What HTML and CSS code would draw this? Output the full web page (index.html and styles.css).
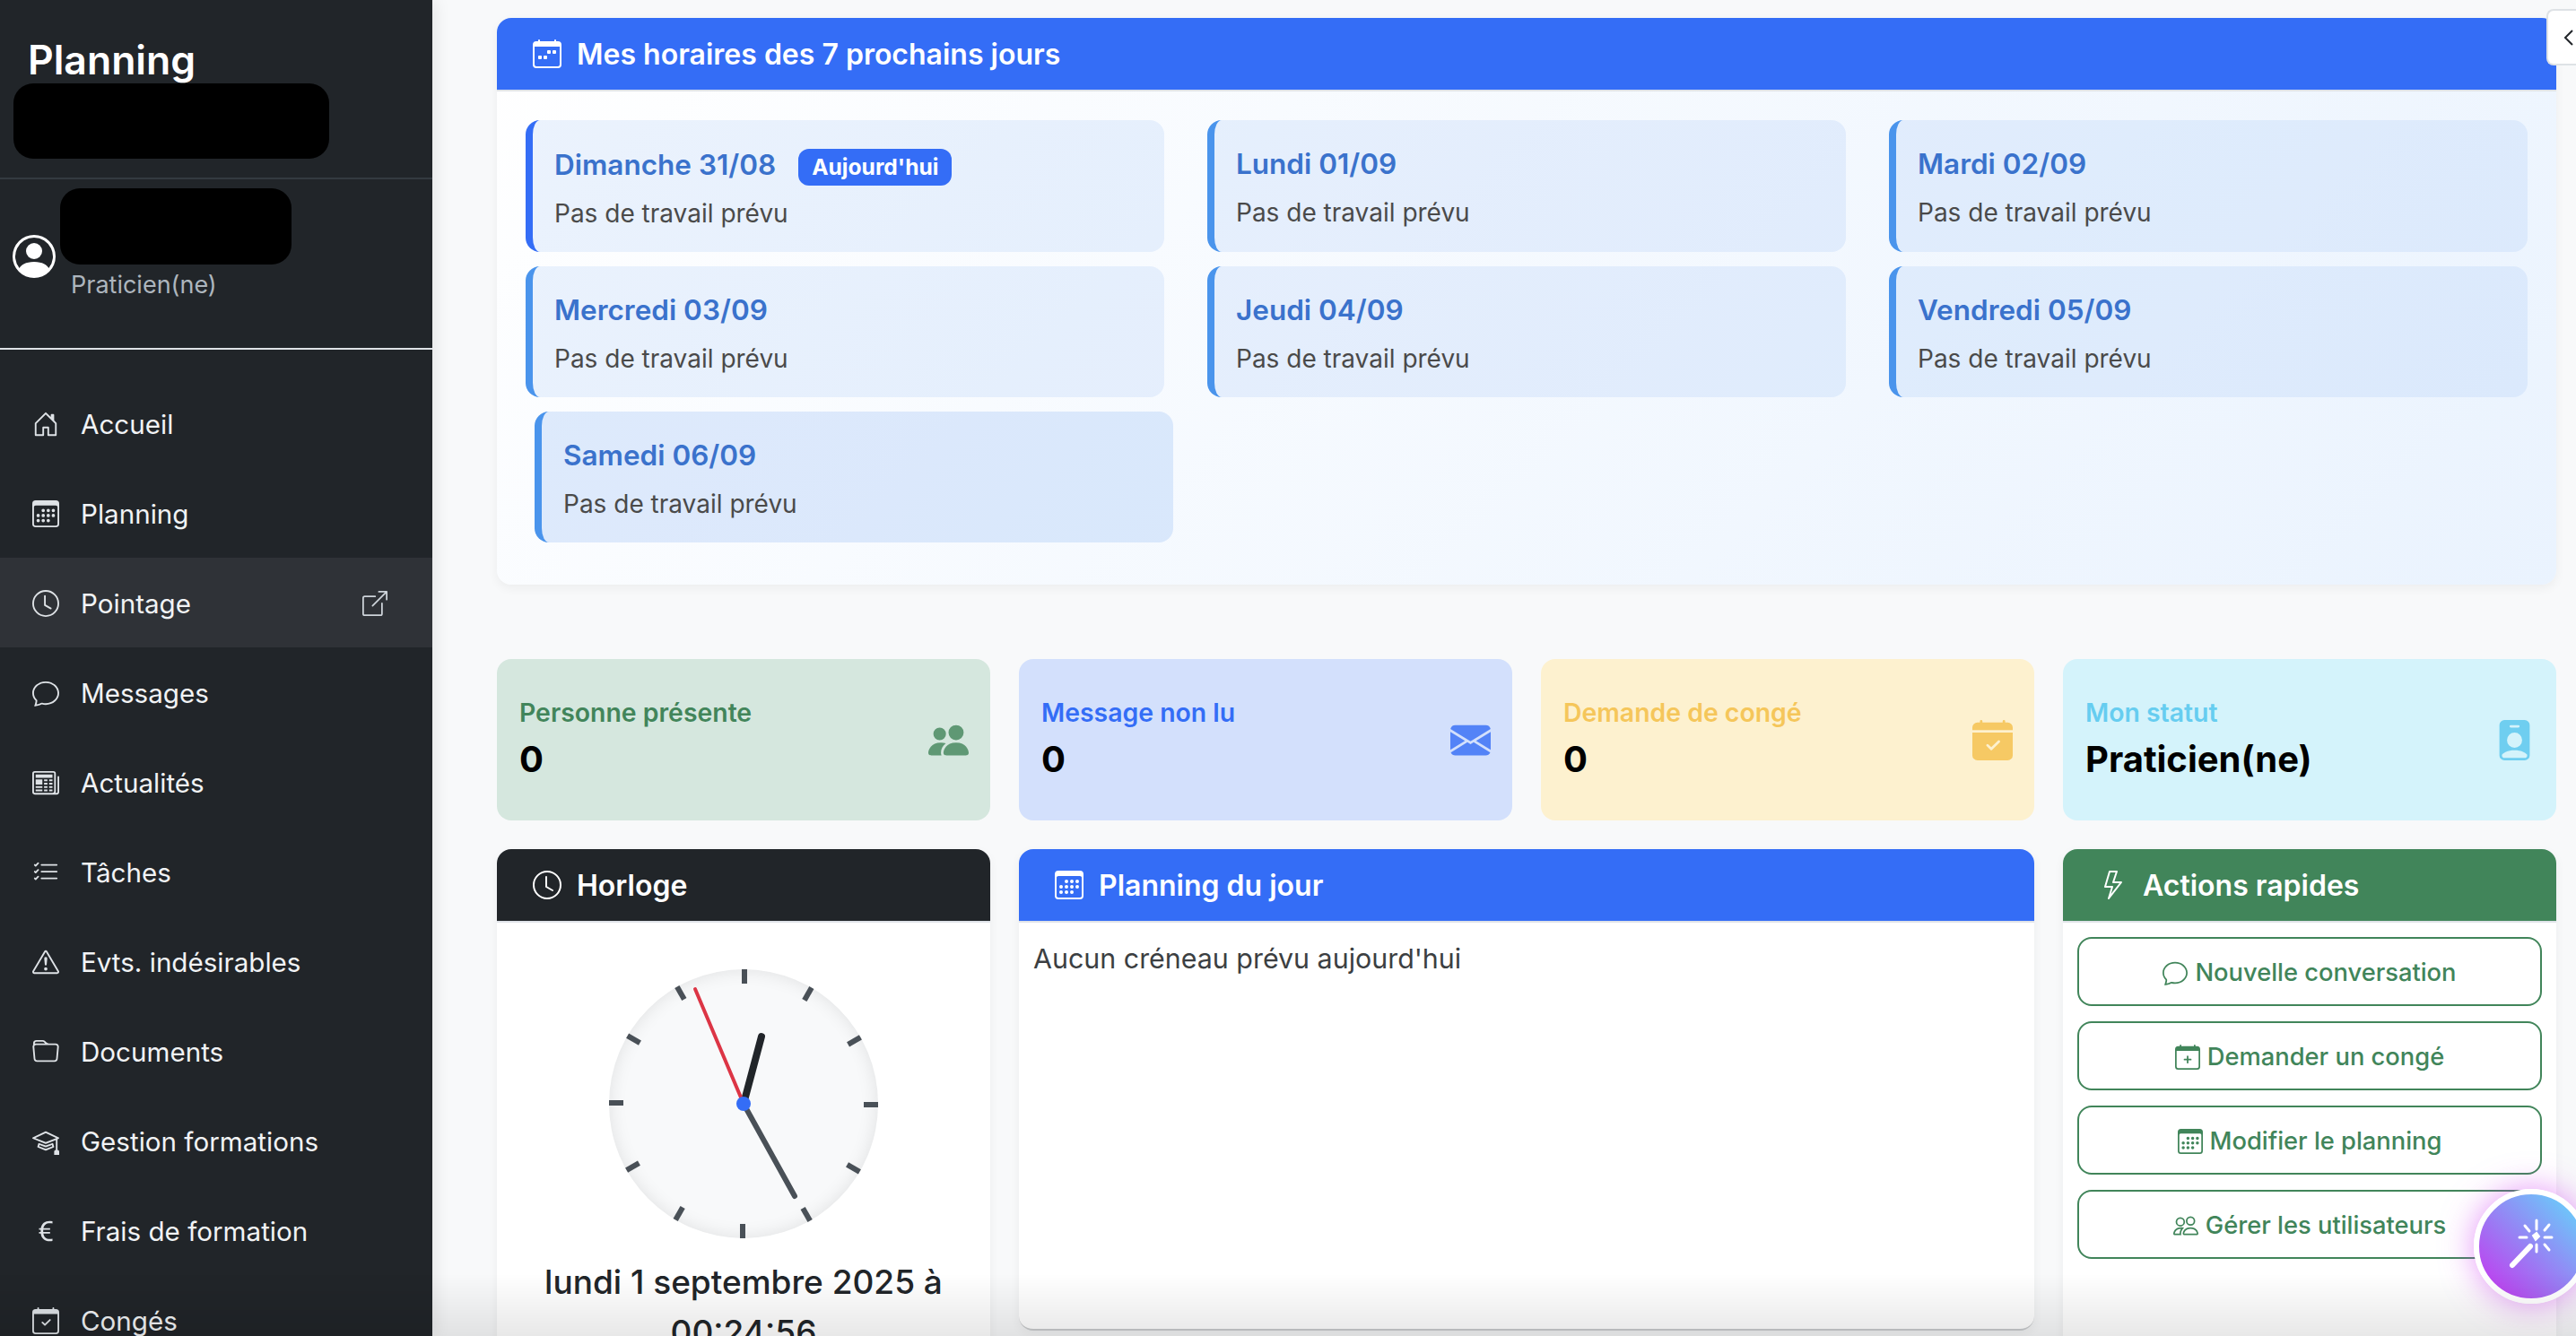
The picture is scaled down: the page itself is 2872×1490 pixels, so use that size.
FILE: index.html
```html
<!DOCTYPE html>
<html lang="fr">
<head>
  <meta charset="UTF-8">
  <title>Planning</title>
  <link rel="stylesheet" href="styles.css">
</head>
<body>

<svg class="sprite" xmlns="http://www.w3.org/2000/svg">
  <symbol id="i-house" viewBox="0 0 16 16"><path d="M8.354 1.146a.5.5 0 0 0-.708 0l-6 6A.5.5 0 0 0 1.5 7.5v7a.5.5 0 0 0 .5.5h4.5a.5.5 0 0 0 .5-.5v-4h2v4a.5.5 0 0 0 .5.5H14a.5.5 0 0 0 .5-.5v-7a.5.5 0 0 0-.146-.354L13 5.793V2.5a.5.5 0 0 0-.5-.5h-1a.5.5 0 0 0-.5.5v1.293L8.354 1.146zM2.5 14V7.707l5.5-5.5 5.5 5.5V14H10v-4a.5.5 0 0 0-.5-.5h-3a.5.5 0 0 0-.5.5v4H2.5z"/></symbol>
  <symbol id="i-calendar3" viewBox="0 0 16 16"><path d="M14 0H2a2 2 0 0 0-2 2v12a2 2 0 0 0 2 2h12a2 2 0 0 0 2-2V2a2 2 0 0 0-2-2zM1 3.857C1 3.384 1.448 3 2 3h12c.552 0 1 .384 1 .857v10.286c0 .473-.448.857-1 .857H2c-.552 0-1-.384-1-.857V3.857z"/><path d="M6.5 7a1 1 0 1 0 0-2 1 1 0 0 0 0 2zm3 0a1 1 0 1 0 0-2 1 1 0 0 0 0 2zm3 0a1 1 0 1 0 0-2 1 1 0 0 0 0 2zm-9 3a1 1 0 1 0 0-2 1 1 0 0 0 0 2zm3 0a1 1 0 1 0 0-2 1 1 0 0 0 0 2zm3 0a1 1 0 1 0 0-2 1 1 0 0 0 0 2zm3 0a1 1 0 1 0 0-2 1 1 0 0 0 0 2zm-9 3a1 1 0 1 0 0-2 1 1 0 0 0 0 2zm3 0a1 1 0 1 0 0-2 1 1 0 0 0 0 2zm3 0a1 1 0 1 0 0-2 1 1 0 0 0 0 2z"/></symbol>
  <symbol id="i-clock" viewBox="0 0 16 16"><path d="M8 3.5a.5.5 0 0 0-1 0V9a.5.5 0 0 0 .252.434l3.5 2a.5.5 0 0 0 .496-.868L8 8.71V3.5z"/><path d="M8 16A8 8 0 1 0 8 0a8 8 0 0 0 0 16zm7-8A7 7 0 1 1 1 8a7 7 0 0 1 14 0z"/></symbol>
  <symbol id="i-chat" viewBox="0 0 16 16"><path d="M2.678 11.894a1 1 0 0 1 .287.801 10.97 10.97 0 0 1-.398 2c1.395-.323 2.247-.697 2.634-.893a1 1 0 0 1 .71-.074A8.06 8.06 0 0 0 8 14c3.996 0 7-2.807 7-6 0-3.192-3.004-6-7-6S1 4.808 1 8c0 1.468.617 2.83 1.678 3.894zm-.493 3.905a21.682 21.682 0 0 1-.713.129c-.2.032-.352-.176-.273-.362a9.68 9.68 0 0 0 .244-.637l.003-.01c.248-.72.45-1.548.524-2.319C.743 11.37 0 9.76 0 8c0-3.866 3.582-7 8-7s8 3.134 8 7-3.582 7-8 7a9.06 9.06 0 0 1-2.347-.306c-.52.263-1.639.742-3.468 1.105z"/></symbol>
  <symbol id="i-newspaper" viewBox="0 0 16 16"><path d="M0 2.5A1.5 1.5 0 0 1 1.5 1h11A1.5 1.5 0 0 1 14 2.5v10.528c0 .3-.05.654-.238.972h.738a.5.5 0 0 0 .5-.5v-9a.5.5 0 0 1 1 0v9a1.5 1.5 0 0 1-1.5 1.5H1.497A1.497 1.497 0 0 1 0 13.5v-11zM12 14c.37 0 .654-.211.853-.441.092-.106.147-.279.147-.531V2.5a.5.5 0 0 0-.5-.5h-11a.5.5 0 0 0-.5.5v11c0 .278.223.5.497.5H12z"/><path d="M2 3h10v2H2V3zm0 3h4v3H2V6zm0 4h4v1H2v-1zm0 2h4v1H2v-1zm5-6h2v1H7V6zm3 0h2v1h-2V6zM7 8h2v1H7V8zm3 0h2v1h-2V8zm-3 2h2v1H7v-1zm3 0h2v1h-2v-1zm-3 2h2v1H7v-1zm3 0h2v1h-2v-1z"/></symbol>
  <symbol id="i-list-check" viewBox="0 0 16 16"><path d="M5 11.5a.5.5 0 0 1 .5-.5h9a.5.5 0 0 1 0 1h-9a.5.5 0 0 1-.5-.5zm0-4a.5.5 0 0 1 .5-.5h9a.5.5 0 0 1 0 1h-9a.5.5 0 0 1-.5-.5zm0-4a.5.5 0 0 1 .5-.5h9a.5.5 0 0 1 0 1h-9a.5.5 0 0 1-.5-.5zM3.854 2.146a.5.5 0 0 1 0 .708l-1.5 1.5a.5.5 0 0 1-.708 0l-.5-.5a.5.5 0 1 1 .708-.708L2 3.293l1.146-1.147a.5.5 0 0 1 .708 0zm0 4a.5.5 0 0 1 0 .708l-1.5 1.5a.5.5 0 0 1-.708 0l-.5-.5a.5.5 0 1 1 .708-.708L2 7.293l1.146-1.147a.5.5 0 0 1 .708 0zm0 4a.5.5 0 0 1 0 .708l-1.5 1.5a.5.5 0 0 1-.708 0l-.5-.5a.5.5 0 0 1 .708-.708l.146.147 1.146-1.147a.5.5 0 0 1 .708 0z"/></symbol>
  <symbol id="i-warning" viewBox="0 0 16 16"><path d="M7.938 2.016A.13.13 0 0 1 8.002 2a.13.13 0 0 1 .063.016.146.146 0 0 1 .054.057l6.857 11.667c.036.06.035.124.002.183a.163.163 0 0 1-.054.06.116.116 0 0 1-.066.017H1.146a.115.115 0 0 1-.066-.017.163.163 0 0 1-.054-.06.176.176 0 0 1 .002-.183L7.884 2.073a.147.147 0 0 1 .054-.057zm1.044-.45a1.13 1.13 0 0 0-1.96 0L.165 13.233c-.457.778.091 1.767.98 1.767h13.713c.889 0 1.438-.99.98-1.767L8.982 1.566z"/><path d="M7.002 12a1 1 0 1 1 2 0 1 1 0 0 1-2 0zM7.1 5.995a.905.905 0 1 1 1.8 0l-.35 3.507a.552.552 0 0 1-1.1 0L7.1 5.995z"/></symbol>
  <symbol id="i-folder" viewBox="0 0 16 16"><path d="M.54 3.87.5 3a2 2 0 0 1 2-2h3.672a2 2 0 0 1 1.414.586l.828.828A2 2 0 0 0 9.828 3h3.982a2 2 0 0 1 1.992 2.181l-.637 7A2 2 0 0 1 13.174 14H2.826a2 2 0 0 1-1.991-1.819l-.637-7a1.99 1.99 0 0 1 .342-1.31zM2.19 4a1 1 0 0 0-.996 1.09l.637 7a1 1 0 0 0 .995.91h10.348a1 1 0 0 0 .995-.91l.637-7A1 1 0 0 0 13.81 4H2.19zm4.69-1.707A1 1 0 0 0 6.172 2H2.5a1 1 0 0 0-1 .981l.006.139C1.72 3.042 1.95 3 2.19 3h5.396l-.707-.707z"/></symbol>
  <symbol id="i-mortarboard" viewBox="0 0 16 16"><path d="M8.211 2.047a.5.5 0 0 0-.422 0l-7.5 3.5a.5.5 0 0 0 .025.917l7.5 3a.5.5 0 0 0 .372 0L14 7.14V13a1 1 0 0 0-1 1v2h3v-2a1 1 0 0 0-1-1V6.739l.686-.275a.5.5 0 0 0 .025-.917l-7.5-3.5ZM8 8.46 1.758 5.965 8 3.052l6.242 2.913L8 8.46Z"/><path d="M4.176 9.032a.5.5 0 0 0-.656.327l-.5 1.7a.5.5 0 0 0 .294.605l4.5 1.8a.5.5 0 0 0 .372 0l4.5-1.8a.5.5 0 0 0 .294-.605l-.5-1.7a.5.5 0 0 0-.656-.327L8 10.466 4.176 9.032Zm-.068 1.873.22-.748 3.496 1.311a.5.5 0 0 0 .352 0l3.496-1.311.22.748L8 12.46l-3.892-1.556Z"/></symbol>
  <symbol id="i-euro" viewBox="0 0 16 16"><path d="M4 9.42h1.063C5.4 12.323 7.317 14 10.34 14c.622 0 1.167-.068 1.659-.185v-1.3c-.484.119-1.045.17-1.659.17-2.1 0-3.455-1.198-3.775-3.264h4.017v-.928H6.497v-.936c0-.11 0-.219.008-.329h4.078v-.927H6.618c.388-1.898 1.719-2.985 3.723-2.985.614 0 1.175.05 1.659.177V2.194A6.617 6.617 0 0 0 10.341 2c-2.928 0-4.82 1.569-5.244 4.3H4v.928h1.01v1.265H4v.928z"/></symbol>
  <symbol id="i-calendar-check" viewBox="0 0 16 16"><path d="M10.854 7.146a.5.5 0 0 1 0 .708l-3 3a.5.5 0 0 1-.708 0l-1.5-1.5a.5.5 0 1 1 .708-.708L7.5 9.793l2.646-2.647a.5.5 0 0 1 .708 0z"/><path d="M3.5 0a.5.5 0 0 1 .5.5V1h8V.5a.5.5 0 0 1 1 0V1h1a2 2 0 0 1 2 2v11a2 2 0 0 1-2 2H2a2 2 0 0 1-2-2V3a2 2 0 0 1 2-2h1V.5a.5.5 0 0 1 .5-.5zM1 4v10a1 1 0 0 0 1 1h12a1 1 0 0 0 1-1V4H1z"/></symbol>
  <symbol id="i-external" viewBox="0 0 16 16"><path d="M8.636 3.5a.5.5 0 0 0-.5-.5H1.5A1.5 1.5 0 0 0 0 4.5v10A1.5 1.5 0 0 0 1.5 16h10a1.5 1.5 0 0 0 1.5-1.5V7.864a.5.5 0 0 0-1 0V14.5a.5.5 0 0 1-.5.5h-10a.5.5 0 0 1-.5-.5v-10a.5.5 0 0 1 .5-.5h6.636a.5.5 0 0 0 .5-.5z"/><path d="M16 .5a.5.5 0 0 0-.5-.5h-5a.5.5 0 0 0 0 1h3.793L6.146 9.146a.5.5 0 1 0 .708.708L15 1.707V5.5a.5.5 0 0 0 1 0v-5z"/></symbol>
  <symbol id="i-person-circle" viewBox="0 0 16 16"><path d="M11 6a3 3 0 1 1-6 0 3 3 0 0 1 6 0z"/><path fill-rule="evenodd" d="M0 8a8 8 0 1 1 16 0A8 8 0 0 1 0 8zm8-7a7 7 0 0 0-5.468 11.37C3.242 11.226 4.805 10 8 10s4.757 1.225 5.468 2.37A7 7 0 0 0 8 1z"/></symbol>
  <symbol id="i-calendar-week" viewBox="0 0 16 16"><path d="M11 6.5a.5.5 0 0 1 .5-.5h1a.5.5 0 0 1 .5.5v1a.5.5 0 0 1-.5.5h-1a.5.5 0 0 1-.5-.5v-1zm-3 0a.5.5 0 0 1 .5-.5h1a.5.5 0 0 1 .5.5v1a.5.5 0 0 1-.5.5h-1a.5.5 0 0 1-.5-.5v-1zm-5 3a.5.5 0 0 1 .5-.5h1a.5.5 0 0 1 .5.5v1a.5.5 0 0 1-.5.5h-1a.5.5 0 0 1-.5-.5v-1zm3 0a.5.5 0 0 1 .5-.5h1a.5.5 0 0 1 .5.5v1a.5.5 0 0 1-.5.5h-1a.5.5 0 0 1-.5-.5v-1z"/><path d="M3.5 0a.5.5 0 0 1 .5.5V1h8V.5a.5.5 0 0 1 1 0V1h1a2 2 0 0 1 2 2v11a2 2 0 0 1-2 2H2a2 2 0 0 1-2-2V3a2 2 0 0 1 2-2h1V.5a.5.5 0 0 1 .5-.5zM1 4v10a1 1 0 0 0 1 1h12a1 1 0 0 0 1-1V4H1z"/></symbol>
  <symbol id="i-people-fill" viewBox="0 0 16 16"><path d="M7 14s-1 0-1-1 1-4 5-4 5 3 5 4-1 1-1 1H7Zm4-6a3 3 0 1 0 0-6 3 3 0 0 0 0 6Zm-5.784 6A2.238 2.238 0 0 1 5 13c0-1.355.68-2.75 1.936-3.72A6.325 6.325 0 0 0 5 9c-4 0-5 3-5 4s1 1 1 1h4.216ZM4.5 8a2.5 2.5 0 1 0 0-5 2.5 2.5 0 0 0 0 5Z"/></symbol>
  <symbol id="i-envelope-fill" viewBox="0 0 16 16"><path d="M.05 3.555A2 2 0 0 1 2 2h12a2 2 0 0 1 1.95 1.555L8 8.414.05 3.555ZM0 4.697v7.104l5.803-3.558L0 4.697ZM6.761 8.83l-6.57 4.027A2 2 0 0 0 2 14h12a2 2 0 0 0 1.808-1.144l-6.57-4.027L8 9.586l-1.239-.757Zm3.436-.586L16 11.801V4.697l-5.803 3.546Z"/></symbol>
  <symbol id="i-calendar-check-fill" viewBox="0 0 16 16"><path d="M4 .5a.5.5 0 0 0-1 0V1H2a2 2 0 0 0-2 2v1h16V3a2 2 0 0 0-2-2h-1V.5a.5.5 0 0 0-1 0V1H4V.5zM16 14V5H0v9a2 2 0 0 0 2 2h12a2 2 0 0 0 2-2zm-5.146-5.146-3 3a.5.5 0 0 1-.708 0l-1.5-1.5a.5.5 0 0 1 .708-.708L7.5 10.793l2.646-2.647a.5.5 0 0 1 .708.708z"/></symbol>
  <symbol id="i-person-badge-fill" viewBox="0 0 16 16"><path d="M2 2a2 2 0 0 1 2-2h8a2 2 0 0 1 2 2v12a2 2 0 0 1-2 2H4a2 2 0 0 1-2-2V2zm4.5 0a.5.5 0 0 0 0 1h3a.5.5 0 0 0 0-1h-3zM8 11a3 3 0 1 0 0-6 3 3 0 0 0 0 6zm5 2.755C12.146 12.825 10.623 12 8 12s-4.146.826-5 1.755V14a1 1 0 0 0 1 1h8a1 1 0 0 0 1-1v-.245z"/></symbol>
  <symbol id="i-lightning" viewBox="0 0 16 16"><path d="M5.52.359A.5.5 0 0 1 6 0h4a.5.5 0 0 1 .474.658L8.694 6H12.5a.5.5 0 0 1 .395.807l-7 9a.5.5 0 0 1-.873-.454L6.823 9.5H3.5a.5.5 0 0 1-.48-.641l2.5-8.5zM6.374 1 4.168 8.5H7.5a.5.5 0 0 1 .478.647L6.78 13.04 11.478 7H8a.5.5 0 0 1-.474-.658L9.306 1H6.374z"/></symbol>
  <symbol id="i-calendar-plus" viewBox="0 0 16 16"><path d="M8 7a.5.5 0 0 1 .5.5V9H10a.5.5 0 0 1 0 1H8.5v1.5a.5.5 0 0 1-1 0V10H6a.5.5 0 0 1 0-1h1.5V7.5A.5.5 0 0 1 8 7z"/><path d="M3.5 0a.5.5 0 0 1 .5.5V1h8V.5a.5.5 0 0 1 1 0V1h1a2 2 0 0 1 2 2v11a2 2 0 0 1-2 2H2a2 2 0 0 1-2-2V3a2 2 0 0 1 2-2h1V.5a.5.5 0 0 1 .5-.5zM1 4v10a1 1 0 0 0 1 1h12a1 1 0 0 0 1-1V4H1z"/><path d="M2 2h12v1H2z"/></symbol>
  <symbol id="i-people" viewBox="0 0 16 16"><path d="M15 14s1 0 1-1-1-4-5-4-5 3-5 4 1 1 1 1h8Zm-7.978-1A.261.261 0 0 1 7 12.996c.001-.264.167-1.03.76-1.72C8.312 10.629 9.282 10 11 10c1.717 0 2.687.63 3.24 1.276.593.69.758 1.457.76 1.72l-.008.002a.274.274 0 0 1-.014.002H7.022ZM11 7a2 2 0 1 0 0-4 2 2 0 0 0 0 4Zm3-2a3 3 0 1 1-6 0 3 3 0 0 1 6 0ZM6.936 9.28a5.88 5.88 0 0 0-1.23-.247A7.35 7.35 0 0 0 5 9c-4 0-5 3-5 4 0 .667.333 1 1 1h4.216A2.238 2.238 0 0 1 5 13c0-1.01.377-2.042 1.09-2.904.243-.294.526-.569.846-.816ZM4.92 10A5.493 5.493 0 0 0 4 13H1c0-.26.164-1.03.76-1.724.545-.636 1.492-1.256 3.16-1.275ZM1.5 5.5a3 3 0 1 1 6 0 3 3 0 0 1-6 0Zm3-2a2 2 0 1 0 0 4 2 2 0 0 0 0-4Z"/></symbol>
</svg>

<aside class="sidebar">
  <div class="brand">
    <h1>Planning</h1>
    <div class="masked masked-brand"></div>
  </div>
  <div class="user">
    <svg class="user-icon"><use href="#i-person-circle"/></svg>
    <div class="user-info">
      <div class="masked masked-user"></div>
      <div class="user-role">Praticien(ne)</div>
    </div>
  </div>
  <nav class="nav">
    <a class="nav-item"><svg class="nav-icon"><use href="#i-house"/></svg>Accueil</a>
    <a class="nav-item"><svg class="nav-icon"><use href="#i-calendar3"/></svg>Planning</a>
    <a class="nav-item nav-hover"><svg class="nav-icon"><use href="#i-clock"/></svg>Pointage<svg class="nav-ext"><use href="#i-external"/></svg></a>
    <a class="nav-item"><svg class="nav-icon"><use href="#i-chat"/></svg>Messages</a>
    <a class="nav-item"><svg class="nav-icon"><use href="#i-newspaper"/></svg>Actualités</a>
    <a class="nav-item"><svg class="nav-icon"><use href="#i-list-check"/></svg>Tâches</a>
    <a class="nav-item"><svg class="nav-icon"><use href="#i-warning"/></svg>Evts. indésirables</a>
    <a class="nav-item"><svg class="nav-icon"><use href="#i-folder"/></svg>Documents</a>
    <a class="nav-item"><svg class="nav-icon"><use href="#i-mortarboard"/></svg>Gestion formations</a>
    <a class="nav-item"><svg class="nav-icon"><use href="#i-euro"/></svg>Frais de formation</a>
    <a class="nav-item"><svg class="nav-icon"><use href="#i-calendar-check"/></svg>Congés</a>
  </nav>
</aside>

<main class="main">
  <section class="card week-card">
    <div class="card-header bg-blue"><svg class="header-icon"><use href="#i-calendar-week"/></svg>Mes horaires des 7 prochains jours</div>
    <div class="week-grid">
      <div class="day day-today">
        <h3>Dimanche 31/08 <span class="badge">Aujourd'hui</span></h3>
        <p>Pas de travail prévu</p>
      </div>
      <div class="day"><h3>Lundi 01/09</h3><p>Pas de travail prévu</p></div>
      <div class="day"><h3>Mardi 02/09</h3><p>Pas de travail prévu</p></div>
      <div class="day"><h3>Mercredi 03/09</h3><p>Pas de travail prévu</p></div>
      <div class="day"><h3>Jeudi 04/09</h3><p>Pas de travail prévu</p></div>
      <div class="day"><h3>Vendredi 05/09</h3><p>Pas de travail prévu</p></div>
      <div class="day day-hover"><h3>Samedi 06/09</h3><p>Pas de travail prévu</p></div>
    </div>
  </section>

  <section class="stats">
    <div class="stat stat-green">
      <div><div class="stat-label">Personne présente</div><div class="stat-value">0</div></div>
      <svg class="stat-icon"><use href="#i-people-fill"/></svg>
    </div>
    <div class="stat stat-blue">
      <div><div class="stat-label">Message non lu</div><div class="stat-value">0</div></div>
      <svg class="stat-icon"><use href="#i-envelope-fill"/></svg>
    </div>
    <div class="stat stat-yellow">
      <div><div class="stat-label">Demande de congé</div><div class="stat-value">0</div></div>
      <svg class="stat-icon"><use href="#i-calendar-check-fill"/></svg>
    </div>
    <div class="stat stat-cyan">
      <div><div class="stat-label">Mon statut</div><div class="stat-value">Praticien(ne)</div></div>
      <svg class="stat-icon"><use href="#i-person-badge-fill"/></svg>
    </div>
  </section>

  <section class="widgets">
    <div class="card widget">
      <div class="card-header bg-dark"><svg class="header-icon"><use href="#i-clock"/></svg>Horloge</div>
      <div class="clock-body">
        <div class="clock">
          <svg class="clock-hands" viewBox="0 0 300 300">
            <g class="ticks">
              <rect x="148" width="6" height="16"/>
              <rect x="148" width="6" height="16" transform="rotate(30 150 150)"/>
              <rect x="148" width="6" height="16" transform="rotate(60 150 150)"/>
              <rect x="148" width="6" height="16" transform="rotate(90 150 150)"/>
              <rect x="148" width="6" height="16" transform="rotate(120 150 150)"/>
              <rect x="148" width="6" height="16" transform="rotate(150 150 150)"/>
              <rect x="148" width="6" height="16" transform="rotate(180 150 150)"/>
              <rect x="148" width="6" height="16" transform="rotate(210 150 150)"/>
              <rect x="148" width="6" height="16" transform="rotate(240 150 150)"/>
              <rect x="148" width="6" height="16" transform="rotate(270 150 150)"/>
              <rect x="148" width="6" height="16" transform="rotate(300 150 150)"/>
              <rect x="148" width="6" height="16" transform="rotate(330 150 150)"/>
            </g>
            <line class="hand-min" x1="150" y1="150" x2="207" y2="253"/>
            <line class="hand-hour" x1="150" y1="150" x2="170" y2="75"/>
            <line class="hand-sec" x1="150" y1="150" x2="96" y2="22"/>
            <circle class="hand-dot" cx="150" cy="150" r="8"/>
          </svg>
        </div>
        <div class="clock-date">lundi 1 septembre 2025 à 00:24:56</div>
      </div>
    </div>

    <div class="card widget widget-wide">
      <div class="card-header bg-blue"><svg class="header-icon"><use href="#i-calendar3"/></svg>Planning du jour</div>
      <div class="today-body">Aucun créneau prévu aujourd'hui</div>
    </div>

    <div class="card widget">
      <div class="card-header bg-green"><svg class="header-icon"><use href="#i-lightning"/></svg>Actions rapides</div>
      <div class="actions">
        <a class="action"><svg class="action-icon"><use href="#i-chat"/></svg>Nouvelle conversation</a>
        <a class="action"><svg class="action-icon"><use href="#i-calendar-plus"/></svg>Demander un congé</a>
        <a class="action"><svg class="action-icon"><use href="#i-calendar3"/></svg>Modifier le planning</a>
        <a class="action"><svg class="action-icon"><use href="#i-people"/></svg>Gérer les utilisateurs</a>
      </div>
    </div>
  </section>
</main>

<div class="side-toggle">
  <svg class="side-chevron" viewBox="0 0 16 32"><path d="M10 8 2 16l8 8"/></svg>
</div>

<div class="fab">
  <svg class="fab-icon" viewBox="0 0 116 116">
    <path class="wand" d="M37 79 57 58"/>
    <path class="rays" d="M64 29v10M64 56v8M45 48h8M73 48h8M51 35l5 6M78 34l-5 6M73 56l5 6"/>
    <path class="spark" d="M60 46l4-3 3 4-4 4z"/>
  </svg>
</div>

<div class="bottom-fade"></div>

</body>
</html>
```

FILE: styles.css
```css
* {
  box-sizing: border-box;
}

html, body {
  height: 100%;
}

body {
  font-family: Inter, "Noto Sans", sans-serif;
  font-size: 30.4px;
  background-color: #f8f9fa;
  color: #212529;
  margin: 0;
  display: flex;
  overflow: hidden;
}

.sprite {
  display: none;
}

/* sidebar */
.sidebar {
  width: 482px;
  flex-shrink: 0;
  background-color: #212529;
  color: #f1f3f5;
  box-shadow: 4px 0 16px rgba(0, 0, 0, 0.08);
}

.brand {
  padding: 42px 15px 21px;
  border-bottom: 2px solid #343a40;
}

.brand h1 {
  margin: 0 0 0 16px;
  font-size: 44.5px;
  line-height: 51px;
  font-weight: 600;
  color: #fff;
}

.masked {
  background-color: #000;
  border-radius: 22px;
}

.masked-brand {
  width: 352px;
  height: 84px;
}

.masked-user {
  width: 258px;
  height: 85px;
}

.user {
  display: flex;
  align-items: flex-start;
  gap: 5px;
  height: 190px;
  padding: 10px 0 0 14px;
  border-bottom: 2px solid #dee2e6;
}

.user-icon {
  width: 48px;
  height: 48px;
  margin-top: 52px;
  fill: #fff;
}

.user-role {
  margin: 2px 0 0 12px;
  font-size: 27px;
  line-height: 42px;
  color: #adb5bd;
}

.nav {
  padding-top: 32px;
  font-size: 29.6px;
}

.nav-item {
  display: flex;
  align-items: center;
  gap: 24px;
  height: 100px;
  padding: 1px 50px 0 36px;
  white-space: nowrap;
}

.nav-hover {
  background-color: #2f3237;
}

.nav-icon {
  width: 30px;
  height: 30px;
  flex-shrink: 0;
  fill: #dee2e6;
}

.nav-ext {
  width: 28px;
  height: 28px;
  margin-left: auto;
  fill: #ced4da;
}

/* main */
.main {
  flex: 1;
  min-width: 0;
  padding: 20px 22px 0 72px;
  overflow: hidden;
}

.card {
  background-color: #fff;
  border-radius: 16px;
  box-shadow: 0 4px 12px rgba(0, 0, 0, 0.05);
  overflow: hidden;
}

.card-header {
  display: flex;
  align-items: center;
  gap: 17px;
  height: 82px;
  padding: 0 40px;
  border-bottom: 2px solid #dfe3e8;
  font-size: 32px;
  font-weight: 600;
  color: #fff;
}

.bg-blue {
  background-color: #346df6;
}

.bg-dark {
  background-color: #212529;
}

.bg-green {
  background-color: #41855a;
}

.header-icon {
  width: 32px;
  height: 32px;
  flex-shrink: 0;
  fill: #fff;
}

.week-card {
  background: linear-gradient(135deg, #ffffff, #eaf3fe);
  height: 632px;
}

.week-grid {
  display: grid;
  grid-template-columns: repeat(3, 1fr);
  gap: 16px 48px;
  padding: 32px;
}

.day {
  padding: 25px 24px 23px;
  border-left: 8px solid #4a94ec;
  border-radius: 16px;
  background-color: rgba(95, 154, 238, 0.12);
}

.day-today {
  border-left-color: #346df6;
}

.day-hover {
  transform: translateX(10px);
  background-color: rgba(95, 154, 238, 0.19);
}

.day h3 {
  display: flex;
  align-items: center;
  gap: 25px;
  margin: 0 0 10px;
  font-size: 31.5px;
  line-height: 48px;
  font-weight: 600;
  color: #3a72cc;
}

.day-today h3 {
  height: 49px;
}

.day p {
  margin: 0;
  font-size: 28px;
  line-height: 40px;
  color: #4a4a4a;
}

.badge {
  padding: 0 15px;
  height: 41px;
  margin-top: 5px;
  line-height: 41px;
  border-radius: 12px;
  background-color: #346df6;
  color: #fff;
  font-size: 24.6px;
  font-weight: 700;
}

/* stats */
.stats {
  display: grid;
  grid-template-columns: repeat(4, 1fr);
  gap: 32px;
  margin-top: 83px;
}

.stat {
  display: flex;
  align-items: center;
  justify-content: space-between;
  height: 180px;
  padding: 0 24px 0 25px;
  border-radius: 16px;
}

.stat-label {
  font-size: 28.4px;
  line-height: 42px;
  font-weight: 600;
}

.stat-value {
  margin: 7px 0 5px;
  font-size: 40px;
  line-height: 48px;
  font-weight: 700;
  color: #000;
}

.stat-icon {
  width: 45px;
  height: 45px;
  flex-shrink: 0;
  opacity: 0.8;
}

.stat-green {
  background-color: #d5e7de;
  color: #42855a;
}

.stat-blue {
  background-color: #d3e0fc;
  color: #346df6;
}

.stat-yellow {
  background-color: #fdf1cf;
  color: #f5c65a;
}

.stat-cyan {
  background-color: #d4f3fb;
  color: #66cdf0;
}

.stat-green .stat-icon { fill: #42855a; }
.stat-blue .stat-icon { fill: #346df6; }
.stat-yellow .stat-icon { fill: #f5c04a; }
.stat-cyan .stat-icon { fill: #56c6ee; }

/* widgets */
.widgets {
  display: grid;
  grid-template-columns: repeat(4, 1fr);
  gap: 32px;
  margin-top: 32px;
  align-items: start;
}

.widget {
  height: 640px;
}

.widget-wide {
  grid-column: span 2;
  height: 537px;
  border-bottom: 2px solid #c9cbcd;
}

.clock-body {
  padding: 52px 32px 0;
  text-align: center;
}

.clock {
  width: 300px;
  height: 300px;
  margin: 0 auto;
  border-radius: 50%;
  background-color: #f8f9fa;
  box-shadow: inset 0 0 20px rgba(0, 0, 0, 0.1);
}

.clock-hands {
  display: block;
  width: 300px;
  height: 300px;
}

.ticks {
  fill: #495057;
}

.hand-hour, .hand-min, .hand-sec {
  stroke-linecap: round;
}

.hand-hour {
  stroke: #212529;
  stroke-width: 8;
}

.hand-min {
  stroke: #495057;
  stroke-width: 6;
}

.hand-sec {
  stroke: #dc3545;
  stroke-width: 4;
}

.hand-dot {
  fill: #346df6;
}

.clock-date {
  margin-top: 21px;
  font-size: 37px;
  line-height: 56px;
  font-weight: 500;
}

.today-body {
  padding: 22px 16px;
  color: #3c3f42;
}

.actions {
  display: flex;
  flex-direction: column;
  gap: 17px;
  padding: 16px 16px;
}

.action {
  display: flex;
  align-items: center;
  justify-content: center;
  gap: 8px;
  height: 77px;
  padding-top: 2px;
  border: 2px solid #41855a;
  border-radius: 16px;
  color: #41855a;
  font-size: 27.3px;
  font-weight: 500;
}

.action-icon {
  width: 28px;
  height: 28px;
  fill: #41855a;
}

/* overlays */
.side-toggle {
  position: fixed;
  top: 10px;
  right: 0;
  display: flex;
  align-items: center;
  width: 33px;
  height: 63px;
  padding-left: 17px;
  background-color: #fff;
  border: 2px solid #dee2e6;
  border-right: 0;
  border-radius: 8px 0 0 8px;
}

.side-chevron {
  width: 16px;
  height: 32px;
  flex-shrink: 0;
  fill: none;
  stroke: #212529;
  stroke-width: 2;
}

.fab {
  position: fixed;
  right: -14px;
  bottom: 36px;
  width: 128px;
  height: 128px;
  border: 6px solid #fff;
  border-radius: 50%;
  background: linear-gradient(45deg, #c92fee, #60dcfb);
  box-shadow: 0 0 36px rgba(205, 60, 240, 0.55);
}

.fab-icon {
  display: block;
  width: 116px;
  height: 116px;
  fill: #fff;
  stroke: #fff;
  stroke-linecap: round;
}

.wand {
  stroke-width: 6;
}

.rays {
  stroke-width: 3;
  fill: none;
}

.spark {
  stroke-width: 2;
}

.bottom-fade {
  position: fixed;
  left: 0;
  right: 0;
  bottom: 0;
  height: 70px;
  background: linear-gradient(to bottom, rgba(0, 0, 0, 0), rgba(0, 0, 0, 0.09));
  pointer-events: none;
}
```
